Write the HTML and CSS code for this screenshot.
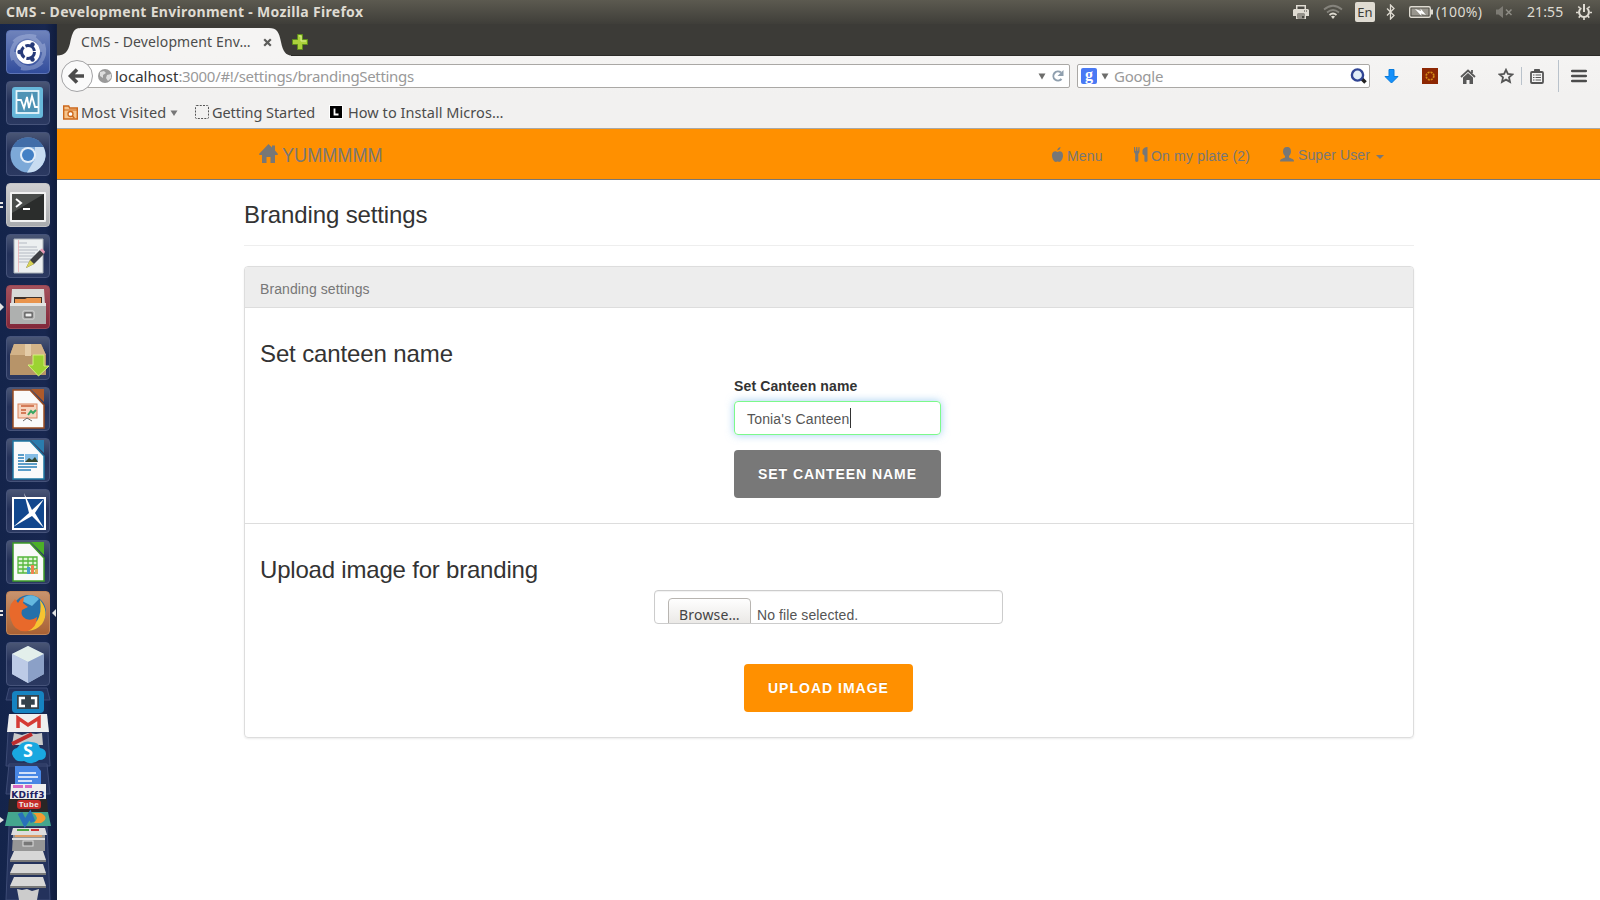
FILE: index.html
```html
<!DOCTYPE html>
<html lang="en">
<head>
<meta charset="utf-8">
<title>CMS - Development Environment</title>
<link rel="stylesheet" href="styles.css">
</head>
<body>
<div class="desktop">
  <header class="topbar">
    <span class="window-title">CMS - Development Environment - Mozilla Firefox</span>
    <div class="indicators">
      <svg class="ind printer" width="16" height="16" viewBox="0 0 16 16"><path d="M3 1h10v4h2l1 1v6h-3v3H3v-3H0V6l1-1h2z" fill="#dfdbd2"/><path d="M4.500 2.500h7V5h-7zM4.500 9.500h7v5h-7z" fill="#4a4943"/><path d="M5 11h6M5 13h4" stroke="#dfdbd2"/><path d="M11 7h3" stroke="#4a4943" stroke-dasharray="1 1"/></svg>
      <svg class="ind wifi" width="20" height="16" viewBox="0 0 20 16" fill="none"><path d="M1 5.500Q10-2 19 5.500" stroke="#85837c" stroke-width="1.700"/><path d="M4 8.500Q10 3.500 16 8.500" stroke="#85837c" stroke-width="1.700"/><path d="M6.500 11Q10 8 13.500 11" stroke="#dfdbd2" stroke-width="1.700"/><path d="M8 12.500Q10 11 12 12.500L10 15z" fill="#dfdbd2"/></svg>
      <span class="lang">En</span>
      <svg class="ind bluetooth" width="9" height="16" viewBox="0 0 9 16"><path d="M1 4.500l7 7L4.500 15V1L8 4.500l-7 7" fill="none" stroke="#dfdbd2" stroke-width="1.300"/></svg>
      <svg class="ind battery" width="24" height="14" viewBox="0 0 24 14"><rect x=".7" y="1.700" width="20.600" height="10.600" rx="1.500" fill="none" stroke="#dfdbd2" stroke-width="1.400"/><rect x="2.500" y="3.500" width="17" height="7" fill="#99968e"/><path d="M22 4.500h2v5h-2z" fill="#dfdbd2"/><path d="M6 4l6 2-.5-2.500L17 10l-5-1.500.5 2.500z" fill="#fff"/></svg>
      <span class="percent">(100%)</span>
      <svg class="ind volume" width="18" height="14" viewBox="0 0 18 14"><path d="M1 4.500h2.500L8 1v12L3.500 9.500H1z" fill="#7d7b74"/><path d="M11 4.500l5.500 5.500m0-5.500L11 10" stroke="#8f8d86" stroke-width="1.500"/></svg>
      <span class="clock">21:55</span>
      <svg class="ind gear" width="16" height="18" viewBox="0 0 16 18"><path d="M5.300 5a4.900 4.900 0 1 0 5.400 0" fill="none" stroke="#dfdbd2" stroke-width="2"/><path d="M8 1v8" stroke="#dfdbd2" stroke-width="2"/><path d="M3.800 5L2.300 3.500M12.200 5l1.500-1.500M2.500 9.500H0M13.500 9.500H16M4.300 13l-1.600 1.600M11.700 13l1.600 1.600M8 14.500V17" stroke="#dfdbd2" stroke-width="1.700"/></svg>
    </div>
  </header>

  <div class="workspace">
    <nav class="launcher">
      <div class="tile dash"><svg viewBox="0 0 44 44"><path d="M7 30C2 15 15 3 30 7M37 14c5 15-7 27-22 24M8 12C18 1 36 8 36 22M36 32C25 43 8 37 8 22" fill="none" stroke="#b9c5e6" stroke-width="4" opacity=".4"/><circle cx="22" cy="22" r="12" fill="#fff"/><circle cx="22" cy="22" r="6.500" fill="none" stroke="#263a79" stroke-width="3" stroke-dasharray="11.600 2"/><circle cx="13.500" cy="22" r="2.200" fill="#263a79"/><circle cx="26.500" cy="14.500" r="2.200" fill="#263a79"/><circle cx="26.500" cy="29.500" r="2.200" fill="#263a79"/></svg></div>
      <div class="tile"><svg viewBox="0 0 44 44"><rect x="6" y="6" width="31" height="31" rx="3" fill="#67b7da"/><rect x="10.500" y="10" width="22" height="22" fill="#4e93b5" stroke="#e9f6fb" stroke-width="1.800"/><path d="M11 19h4l3 8 3-11 2 11 3-12 3 11h3" fill="none" stroke="#fff" stroke-width="1.800"/></svg></div>
      <div class="tile"><svg viewBox="0 0 44 44"><circle cx="22" cy="23" r="17.500" fill="#7da9d8"/><path d="M6.500 15A17.500 17.500 0 0 1 37.500 15H22z" fill="#416da8"/><path d="M37.500 15a17.500 17.500 0 0 1-16.500 25.500l8-13.500 0-12z" fill="#c8dcf1"/><circle cx="22" cy="23" r="8" fill="#e3edf8"/><circle cx="22" cy="23" r="6" fill="#4380c5"/></svg></div>
      <div class="tile silver"><svg viewBox="0 0 44 44"><rect x="4" y="9" width="36" height="30" rx="1" fill="#f2f2f2"/><rect x="6" y="11" width="32" height="26" fill="#2b2d2c"/><path d="M6 11h32L6 30z" fill="#4a4d4b"/><path d="M10 16l5 4-5 4M17 26h7" fill="none" stroke="#fff" stroke-width="2"/></svg><i class="pips"></i></div>
      <div class="tile"><svg viewBox="0 0 44 44"><path d="M8 5h29v34H8z" fill="#eceff0" stroke="#aab1b8"/><path d="M12 9h9M12 13h19M12 16h20M12 19h17M12 22h20M12 25h13M12 28h11" stroke="#b4bac1" stroke-width="1.200"/><path d="M12.500 6v32" stroke="#eeb0b4" stroke-width=".8"/><path d="M20 34l4-8 10-10 4 4-10 10z" fill="#3f4044"/><path d="M20 34l4-8 4 4z" fill="#d8d255"/><path d="M34 16l2-1.500 3 3-1 2.500z" fill="#e999b5"/></svg></div>
      <div class="tile red"><svg viewBox="0 0 44 44"><path d="M6 4h32l1 16H5z" fill="#d9d9d7"/><path d="M8 12h28v8H8z" fill="#403129"/><path d="M9 14h10l2-1h14v7H9z" fill="#e9944c"/><path d="M4 19h36v20H4z" fill="#aeb0af"/><path d="M4 18h36v3H4z" fill="#e4e4e2"/><rect x="17" y="26" width="11" height="8" rx="1" fill="#888" stroke="#ddd"/><path d="M19 28h7v4h-7z" fill="#eee" stroke="#555"/></svg><i class="arrow-left"></i></div>
      <div class="tile"><svg viewBox="0 0 44 44"><path d="M8 8h27l5 11v20H4V19z" fill="#b79469"/><path d="M8 8h27l5 11H4z" fill="#d3b388"/><path d="M19 8h6v12h-6z" fill="#e4cca8"/><path d="M27 19h11v11h5L32.500 40 22 29h5z" fill="#9cd331" stroke="#d3f17d"/></svg></div>
      <div class="tile"><svg viewBox="0 0 44 44"><path d="M7 3h17l14 15v23H7z" fill="#fafafa" stroke="#9b4c22" stroke-width="1.500"/><path d="M25 2h13v13z" fill="#ad5a2b"/><rect x="12" y="17" width="19" height="14" fill="#f7d6c2" stroke="#da825b"/><path d="M15 19h13M15 23h5M15 26h5" stroke="#c85f39" stroke-width="1.500"/><path d="M22 28l3-4 2 2 3-3" fill="none" stroke="#3ba663" stroke-width="2"/><path d="M21 31l-4 3m4-3l5 3" stroke="#666"/></svg></div>
      <div class="tile"><svg viewBox="0 0 44 44"><path d="M7 3h17l14 15v23H7z" fill="#fafafa" stroke="#1e77a3" stroke-width="1.500"/><path d="M25 2h13v13z" fill="#2a7cad"/><path d="M12 17h6M12 20h6M12 23h6M12 26h19M12 29h19M12 32h13" stroke="#2980b9" stroke-width="1.500"/><path d="M19 16h13v8H19z" fill="#84bde5"/><path d="M19 24l4-4 3 2 3-3 3 5z" fill="#33472f"/></svg></div>
      <div class="tile"><svg viewBox="0 0 44 44"><path d="M7 9h32v31H7z" fill="#12478d" stroke="#fff" stroke-width="2"/><path d="M18 4l8 17 12-11-9 14 9 15-12-12L7 38l16-14z" fill="#fff"/></svg></div>
      <div class="tile"><svg viewBox="0 0 44 44"><path d="M7 3h17l14 15v23H7z" fill="#fafafa" stroke="#3d9b27" stroke-width="1.500"/><path d="M25 2h13v13z" fill="#4caf28"/><path d="M12 17h19v16H12zM12 21h19M12 25h19M12 29h19M17 17v16M22 17v16M27 17v16" fill="#e0f5d7" stroke="#55b63c" stroke-width="1.300"/><path d="M21 27h3v7h-3z" fill="#479dce"/><path d="M25 25h3v9h-3z" fill="#ef8251"/><path d="M29 29h3v5h-3z" fill="#dfb15e"/></svg></div>
      <div class="tile firefox"><svg viewBox="0 0 44 44"><circle cx="23" cy="21" r="17" fill="#2670aa"/><path d="M14 9Q25 0 33 8l-7 7z" fill="#64b8df"/><path d="M34 9q10 12 2 24-8 9-19 6l14-9q5-8 3-21z" fill="#f6c331"/><path d="M5 13l4-5 3 4q3-5 6-6l-1 6 5 4-6 3q-2 6 4 9 6 2 11-2 0 10-9 14Q9 42 5 29 2 20 5 13z" fill="#e8692b"/></svg><i class="pips"></i><i class="arrow-right"></i></div>
      <div class="tile"><svg viewBox="0 0 44 44"><path d="M22 4l16 8v20l-16 9-16-9V12z" fill="#aebfd9"/><path d="M22 4l16 8-16 8-16-8z" fill="#e3efeb"/><path d="M22 20l16-8v20l-16 9z" fill="#8ba0c7"/><path d="M6 12l16 8v21L6 32z" fill="#bdcbe6"/></svg></div>
      <svg class="folded" width="57" height="214" viewBox="0 0 57 214">
        <path d="M9 2h38l3 12H6zM9 30h38l3 50H6zM9 78h38l3 30H6zM9 140h38l3 74H6z" fill="#24325c" stroke="#3d4b75"/>
        <rect x="12" y="5" width="32" height="22" rx="4" fill="#1683c1"/><path d="M17 9h22v14H17z" fill="#34424b"/><path d="M25 12h-5v8h5M31 12h5v8h-5" fill="none" stroke="#fff" stroke-width="2.500"/>
        <path d="M9 28h38l2 18H7z" fill="#efefef"/><path d="M18 42V32l10 7 11-7v10" fill="none" stroke="#d53b35" stroke-width="3.500"/>
        <path d="M14 47l8 2 6-2 8 1 6-1 1 12H12z" fill="#cacaca"/><path d="M12 58L32 48" stroke="#be2c2d" stroke-width="4"/><path d="M12 68q0-5 5-6 6-8 14-6 8 0 9 6 6 1 6 6 0 6-7 6-7 6-15 1-9 2-12-7z" fill="#19a8e0"/><text x="28" y="71" class="skype">S</text>
        <path d="M15 80h22l4 5v14H15z" fill="#4887e5"/><path d="M19 87h17M18 91h20M18 95h14" stroke="#fff" stroke-width="1.500"/>
        <path d="M11 98h35v15H10z" fill="#eee"/><path d="M13 99h10v3H13zM25 99h7v3h-7z" fill="#d868c2"/><text x="28" y="112" class="kdiff">KDiff3</text>
        <path d="M9 113h38l1 13H8z" fill="#292626"/><rect x="17" y="114" width="24" height="9" rx="3" fill="#c62d2a"/><text x="29" y="121" class="tube">Tube</text>
        <path d="M8 126h40l3 14H5z" fill="#44a68e"/><path d="M20 127l5 10 5-8 3 7" fill="none" stroke="#2870ba" stroke-width="5"/><path d="M33 127q7 4 1 10h7q9-5 0-10z" fill="#f39a32"/>
        <path d="M13 142h32l2 7H11z" fill="#ddd"/><path d="M17 144h12" stroke="#4aa642" stroke-width="2"/><path d="M31 144h8" stroke="#c33" stroke-width="2"/>
        <path d="M13 149h32v16H12z" fill="#969696"/><path d="M12 153h33" stroke="#ddd" stroke-width="2"/><path d="M15 150h27" stroke="#de9e68" stroke-width="2"/><rect x="23" y="155" width="10" height="5" fill="#777" stroke="#ddd"/>
        <path d="M14 165h29l3 9H10zM14 178h29l3 9H10zM14 191h29l3 9H10z" fill="#d7d7d7"/><path d="M10 175h36M10 188h36M10 201h36" stroke="#777" stroke-width="2"/>
        <path d="M17 203l5 1 5-1 5 2 7-2-2 11H19z" fill="#ccc"/><path d="M0 131v6l4-3z" fill="#e5e5e5"/>
      </svg>
    </nav>

    <main class="browser">
      <div class="tabstrip">
        <div class="tab">
          <svg class="tab-shape" width="234" height="32" viewBox="0 0 234 32"><path d="M0 32v-.5c8 0 11-4 13-12 3-13 4-15.500 12-15.500h187c8 0 10 4 12 14 2 10 5 13 10 13.500v.5z" fill="#f5f4f3"/></svg>
          <span class="tab-title">CMS - Development Env…</span>
          <svg class="tab-close" width="9" height="9" viewBox="0 0 9 9"><path d="M1.200 1.200l6.600 6.600m0-6.600L1.200 7.800" stroke="#5c5c5a" stroke-width="2.200"/></svg>
        </div>
        <svg class="newtab" width="16" height="16" viewBox="0 0 16 16"><path d="M5.500.5h5v5h5v5h-5v5h-5v-5h-5v-5h5z" fill="#acd23c" stroke="#5f8e1c"/><path d="M7 2h2v5h5" stroke="#d9ee91" fill="none"/></svg>
      </div>
      <div class="navbar">
        <div class="urlbar">
          <svg class="back" width="34" height="34" viewBox="0 0 34 34"><circle cx="17" cy="17" r="15.500" fill="#fafafa" stroke="#a3a3a5"/><path d="M17 10.500L10.500 17l6.500 6.500M11.500 17H24" fill="none" stroke="#4c4c4c" stroke-width="3.600"/></svg>
          <svg class="globe" width="14" height="14" viewBox="0 0 14 14"><circle cx="7" cy="7" r="7" fill="#9a9a9a"/><path d="M2 3l4-1 2 2-3 2v3L2 7zM9 6l4-1v4l-3 3-2-3z" fill="#dedede"/></svg>
          <span class="url"><b>localhost</b>:3000/#!/settings/brandingSettings</span>
          <svg class="url-arrow" width="8" height="7" viewBox="0 0 8 7"><path d="M.5.5h7L4 6.500z" fill="#6d6d6b"/></svg>
          <svg class="reload" width="12" height="12" viewBox="0 0 12 12"><path d="M9.500 9A4.600 4.600 0 1 1 9 2.500" fill="none" stroke="#8f9fae" stroke-width="2"/><path d="M11.500 0v6h-6z" fill="#8f9fae"/></svg>
        </div>
        <div class="search">
          <span class="google-icon">g</span>
          <svg width="8" height="7" viewBox="0 0 8 7"><path d="M.5.500h7L4 6.500z" fill="#6d6d6b"/></svg>
          <span class="search-text">Google</span>
          <svg class="magnifier" width="17" height="16" viewBox="0 0 17 16"><path d="M11 10l4.500 4.500" stroke="#222" stroke-width="3.500"/><circle cx="7.500" cy="7" r="5.600" fill="#e2eef8" stroke="#304594" stroke-width="2.400"/></svg>
        </div>
        <svg class="tool download" width="15" height="15" viewBox="0 0 15 15"><path d="M5 .5h5v7h4l-6.500 6.500L1 7.500h4z" fill="#1590fa" stroke="#087bdc"/></svg>
        <svg class="tool addon" width="16" height="16" viewBox="0 0 16 16"><path d="M0 0h16v16H0z" fill="#8d2703"/><circle cx="8" cy="8" r="3.800" fill="none" stroke="#d48b16" stroke-width="1.700" stroke-dasharray="2 1"/></svg>
        <svg class="tool home" width="16" height="15" viewBox="0 0 16 15"><path d="M1 8l7-6.500L15 8M12 4V1" fill="none" stroke="#585858" stroke-width="1.800"/><path d="M3 8.500l5-4.500 5 4.500V15H9.500v-4h-3v4H3z" fill="#585858"/></svg>
        <svg class="tool star" width="16" height="16" viewBox="0 0 16 16"><path d="M8 1.800l1.900 4.100 4.500.5-3.400 3 1 4.500L8 11.600l-4 2.300 1-4.500-3.400-3 4.500-.5z" fill="none" stroke="#555" stroke-width="1.800"/></svg>
        <i class="divider short"></i>
        <svg class="tool list" width="14" height="16" viewBox="0 0 14 16"><rect x="1" y="4" width="12" height="11" rx="1" fill="#f4f4f4" stroke="#555" stroke-width="1.800"/><path d="M4.500 3V1.500h5V3z" fill="#555" stroke="#555"/><path d="M3 7h1.500M3 9.500h1.500M3 12h1.500M5.500 7H11M5.500 9.500H11M5.500 12H11" stroke="#555" stroke-width="1.100"/></svg>
        <i class="divider tall"></i>
        <svg class="tool burger" width="16" height="14" viewBox="0 0 16 14"><path d="M1.200 2h13.600M1.200 7h13.600M1.200 12h13.600" stroke="#4c4c4c" stroke-width="2.600" stroke-linecap="round"/></svg>
      </div>
      <div class="bookmarks">
        <svg width="15" height="15" viewBox="0 0 15 15"><path d="M.7 14V1h5l1 2h7.600v11z" fill="#f6c48d" stroke="#cc671b" stroke-width="1.400"/><path d="M1 5h13" stroke="#cc671b"/><circle cx="7.500" cy="9" r="2.500" fill="#fff" stroke="#cc671b" stroke-width="1.300"/><path d="M9.300 11l2 2" stroke="#cc671b" stroke-width="1.400"/></svg>
        <span class="bm visited">Most Visited</span>
        <svg class="bm-arrow" width="8" height="7" viewBox="0 0 8 7"><path d="M.5.500h7L4 6z" fill="#777"/></svg>
        <svg class="bm-dotted" width="14" height="14" viewBox="0 0 14 14"><rect x=".5" y=".5" width="13" height="13" rx="1" fill="none" stroke="#555" stroke-dasharray="2 1.250"/></svg>
        <span class="bm started">Getting Started</span>
        <svg class="bm-l" width="14" height="14" viewBox="0 0 14 14"><path d="M0 0h14v14H0z" fill="#fff"/><path d="M1 1h12v12H1z" fill="#000"/><path d="M5.500 3.500v6h4" stroke="#fff" stroke-width="1.800" fill="none"/></svg>
        <span class="bm install">How to Install Micros…</span>
      </div>

      <section class="page">
        <div class="site-nav">
          <a class="brand"><svg width="19" height="19" viewBox="0 0 19 19"><path d="M9.500 0l3.500 3.500V1.500h3v5L19 10l-.5 1H16v8h-4.500v-6h-4v6H3v-8H.5L0 10z" fill="#777"/></svg><span class="brand-name">YUMMMMM</span></a>
          <a class="menu"><svg width="11" height="15" viewBox="0 0 11 15"><path d="M5.200 3.500Q5.500.5 8.500 0 8.500 3 5.200 3.500zM5.500 5C8 3.500 11 4.500 11 8.500c0 3-2 6.500-4 6.500-1 0-1-.4-1.500-.4S5 15 4 15C2 15 0 11.500 0 8.500 0 4.500 3 3.500 5.500 5z" fill="#777"/></svg><span>Menu</span></a>
          <a class="plate"><svg width="14" height="15" viewBox="0 0 14 15"><path d="M0 0h1l.4 4H2l.2-4h1.100l.2 4h.6l.4-4h1v5L4.300 7v7.200l-1.600.8-1.500-.8V7L0 5zM13.500 0v14.200L12 15l-1.600-.8V8.500L8.500 7V3Q10 0 13.500 0z" fill="#777"/></svg><span>On my plate (2)</span></a>
          <a class="user"><svg width="14" height="15" viewBox="0 0 14 15"><path d="M7 0c3 0 4 2 4 4.500C11 6.500 9.800 8 9 9v1.500l4 1.700q1 .5 1 2.300H0q0-1.800 1-2.300l4-1.700V9C4.200 8 3 6.500 3 4.500 3 2 4 0 7 0z" fill="#777"/></svg><span>Super User</span><i class="caret"></i></a>
        </div>
        <div class="container">
          <h3 class="page-header">Branding settings</h3>
          <div class="panel">
            <div class="panel-heading">Branding settings</div>
            <div class="block name-block">
              <h3 class="h-name">Set canteen name</h3>
              <form class="name-form">
                <label>Set Canteen name</label>
                <div class="field"><span>Tonia's Canteen</span><i class="cursor"></i></div>
                <div class="btn grey"><span>SET CANTEEN NAME</span></div>
              </form>
            </div>
            <div class="block upload-block">
              <h3 class="h-upload">Upload image for branding</h3>
              <div class="file"><div class="browse">Browse…</div><span>No file selected.</span></div>
              <div class="btn orange"><span>UPLOAD IMAGE</span></div>
            </div>
          </div>
        </div>
      </section>
    </main>
  </div>
</div>
</body>
</html>
```
FILE: styles.css
```css
* { box-sizing: border-box; }
body { margin: 0; }
svg { display: block; flex: none; }
i { display: block; flex: none; }
span { white-space: nowrap; flex: none; }
.desktop { width: 1600px; height: 900px; overflow: hidden; background: #fff; font-family: "Noto Sans", sans-serif; display: flex; flex-direction: column; }

.topbar { height: 24px; flex: none; background: linear-gradient(#5c5a50, #3f3e39); display: flex; align-items: center; color: #dfdbd2; font-size: 14px; }
.window-title { margin-left: 6px; font-weight: 700; font-size: 14px; line-height: 24px; letter-spacing: .32px; }
.indicators { display: flex; align-items: center; width: 307px; height: 24px; margin-left: auto; }
.wifi { margin-left: 14px; }
.lang { margin-left: 12px; width: 20px; height: 20px; border-radius: 2px; background: #dfdbd2; color: #3c3b37; text-align: center; line-height: 20px; font-size: 13px; }
.bluetooth { margin-left: 11px; }
.battery { margin-left: 14px; }
.percent { margin: -2px 0 0 3px; width: 48px; letter-spacing: .4px; }
.volume { margin-left: 11px; }
.clock { margin: -2px 0 0 14px; width: 38px; letter-spacing: .1px; }
.gear { margin-left: 11px; }

.workspace { display: flex; flex: 1; min-height: 0; }
.launcher { width: 57px; flex: none; background: linear-gradient(90deg, #14244b, #182750 80%, #101d3e); padding: 6px 0 0 6px; display: flex; flex-direction: column; gap: 7px; border-right: 1px solid #14203c; }
.tile { width: 44px; height: 44px; flex: none; border-radius: 4px; background: linear-gradient(#4a5675, #24315a 45%, #2b3961); border: 1px solid #46537a; position: relative; }
.tile > svg { width: 44px; height: 44px; margin: -1px; }
.dash { background: linear-gradient(#6f83bb, #324d9c); border-color: #5d74b5; }
.silver { background: linear-gradient(#cfcfd1, #a9abae); border-color: #c4c4c6; }
.red { background: linear-gradient(#a4515c, #82283a); border-color: #9a4855; }
.firefox { background: linear-gradient(#c8936e, #a96134); border-color: #c18559; }
.pips { position: absolute; left: -8px; top: 18px; width: 4px; height: 6px; border: solid #e3e3e3; border-width: 2px 0; }
.arrow-left { position: absolute; left: -7px; top: 17px; border: 4px solid transparent; border-left-color: #e3e3e3; border-right: 0; }
.arrow-right { position: absolute; right: -7px; top: 17px; border: 4px solid transparent; border-right-color: #e3e3e3; border-left: 0; }
.folded { margin: -7px 0 0 -6px; }
.skype { font: 700 18px "Open Sans", sans-serif; fill: #fff; text-anchor: middle; }
.kdiff { font: 700 9px "DejaVu Sans", sans-serif; fill: #202061; text-anchor: middle; letter-spacing: .3px; }
.tube { font: 700 8px "Liberation Sans", sans-serif; fill: #eee; text-anchor: middle; letter-spacing: .5px; }

.browser { flex: 1; min-width: 0; display: flex; flex-direction: column; }
.tabstrip { height: 32px; flex: none; background: #3c3b37; border-bottom: 1px solid #2c2b28; display: flex; align-items: flex-start; }
.tab { width: 234px; height: 32px; position: relative; display: flex; align-items: center; }
.tab-shape { position: absolute; left: 0; top: 0; }
.tab-title { position: relative; margin-left: 24px; width: 182px; font-size: 14px; line-height: 20px; margin-top: 3px; color: #4c4c4c; letter-spacing: .12px; }
.tab-close { position: relative; margin-top: 4px; }
.newtab { margin: 10px 0 0 1px; }
.navbar { height: 37px; flex: none; background: linear-gradient(#f5f4f3, #f2f1f0); display: flex; align-items: center; padding-bottom: 1px; padding-top: 4px; }
.urlbar { margin-left: 20px; width: 993px; height: 24px; background: #fff; border: 1px solid #aaa8a5; border-radius: 2px; display: flex; align-items: center; }
.back { margin-left: -18px; }
.globe { margin-left: 4px; }
.url { margin-left: 3px; font-size: 15px; line-height: 22px; color: #999; letter-spacing: -.26px; }
.url b { font-weight: 400; color: #333; letter-spacing: 0; }
.url { letter-spacing: -.32px; }
.url-arrow { margin-left: auto; }
.reload { margin: 0 5px 0 6px; }
.search { margin-left: 7px; width: 293px; height: 24px; background: #fff; border: 1px solid #aaa8a5; border-radius: 2px; display: flex; align-items: center; padding: 0 2px 0 3px; }
.google-icon { width: 16px; height: 16px; background: #4979f4; border-radius: 2px; color: #fff; font: 700 16px/13px "Liberation Serif", serif; text-align: center; margin-right: 4px; }
.search-text { margin-left: 5px; font-size: 15px; line-height: 22px; color: #999; letter-spacing: -.25px; }
.magnifier { margin-left: auto; }
.download { margin-left: 14px; }
.addon { margin-left: 23px; }
.home { margin-left: 22px; }
.star { margin-left: 22px; }
.divider { width: 1px; background: #b9c2cb; }
.short { height: 18px; margin-left: 7px; }
.tall { height: 32px; margin-left: 14px; }
.list { margin-left: 8px; }
.burger { margin-left: 12px; }
.bookmarks { height: 36px; flex: none; background: #f2f1f0; border-bottom: 1px solid #aaa9a6; display: flex; align-items: center; padding: 3px 0 0 6px; color: #4c4c4c; font-size: 14.500px; }
.bm { line-height: 20px; }
.visited { margin-left: 3px; width: 87px; letter-spacing: .17px; }
.bm-arrow { margin: 2px 0 0 2px; }
.bm-dotted { margin-left: 17px; }
.started { margin-left: 3px; width: 104px; letter-spacing: -.07px; }
.bm-l { margin-left: 13px; }
.install { margin-left: 5px; letter-spacing: .05px; }

.page { flex: 1; background: #fff; font-family: "Liberation Sans", Arial, sans-serif; color: #333; }
.site-nav { height: 51px; background: #ff9000; border-bottom: 1px solid #777; display: flex; align-items: flex-start; color: #777; font-size: 14px; }
.site-nav a { display: flex; }
.brand { margin: 15px 0 0 202px; }
.brand-name { font-size: 20px; line-height: 20px; margin: 1px 0 0 4px; transform: scaleX(.905); transform-origin: left; }
.site-nav a span { display: block; }
.menu { width: 51px; margin: 18px 0 0 auto; }
.menu span, .plate span, .user span { line-height: 16px; margin-top: 1px; }
.menu span { margin-left: 4px; letter-spacing: .2px; }
.plate { width: 116px; margin: 18px 0 0 31px; }
.plate span { margin-left: 3px; letter-spacing: .18px; }
.user { width: 105px; margin: 18px 215px 0 30px; }
.user span { margin: 0 0 0 4px; letter-spacing: .12px; }
.caret { border: 4px solid transparent; border-top-color: #777; border-bottom: 0; margin: 8px 0 0 6px; }
.container { width: 1170px; margin-left: 187px; }
.container { width: 1170px; }
h3 { margin: 0; font-weight: 400; font-size: 24px; line-height: 26px; }
.page-header { height: 66px; padding-top: 22px; border-bottom: 1px solid #eee; letter-spacing: -.12px; }
.h-name { letter-spacing: -.12px; }
.h-upload { letter-spacing: -.2px; }
.panel { margin-top: 20px; height: 472px; border: 1px solid #ddd; border-radius: 4px; box-shadow: 0 1px 2px rgba(0,0,0,.08); }
.panel-heading { height: 41px; background: #ededed; border-bottom: 1px solid #ddd; border-radius: 3px 3px 0 0; padding: 2px 15px 0; font-size: 14px; line-height: 41px; color: #777; letter-spacing: .09px; }
.block { padding: 33px 15px 0; }
.name-block { height: 216px; border-bottom: 1px solid #ddd; }
.name-form { width: 207px; margin: 11px 0 0 474px; display: flex; flex-direction: column; }
label { font-weight: 700; font-size: 14px; line-height: 16px; height: 23px; white-space: nowrap; letter-spacing: .13px; }
.field { height: 34px; border: 1px solid #7cf98b; border-radius: 4px; display: flex; align-items: center; padding: 2px 0 0 12px; font-size: 14px; color: #555; letter-spacing: .17px; box-shadow: 0 0 8px rgba(102,175,233,.6); }
.cursor { width: 1px; height: 20px; background: #333; margin-top: -2px; }
.btn { height: 48px; border-radius: 4px; display: flex; align-items: center; color: #fff; font-weight: 700; font-size: 14px; letter-spacing: 1px; padding-left: 24px; text-shadow: 0 -1px 0 rgba(0,0,0,.12); }
.grey { margin-top: 15px; background: #787878; letter-spacing: .94px; }
.orange { width: 169px; background: #ff9000; margin: 40px 0 0 484px; }
.file { width: 349px; height: 34px; border: 1px solid #ccc; border-radius: 4px; margin: 7px 0 0 394px; overflow: hidden; padding: 7px 0 0 13px; display: flex; font-size: 14px; line-height: 34px; color: #555; letter-spacing: .1px; box-shadow: inset 0 1px 1px rgba(0,0,0,.06); }
.browse { width: 83px; height: 34px; flex: none; border: 1px solid #b8b5b1; border-radius: 4px; background: linear-gradient(#fefefe, #e8e6e3 85%); font: 14px/32px "Noto Sans", sans-serif; color: #444; padding-left: 10px; margin-right: 6px; letter-spacing: .2px; }
```
